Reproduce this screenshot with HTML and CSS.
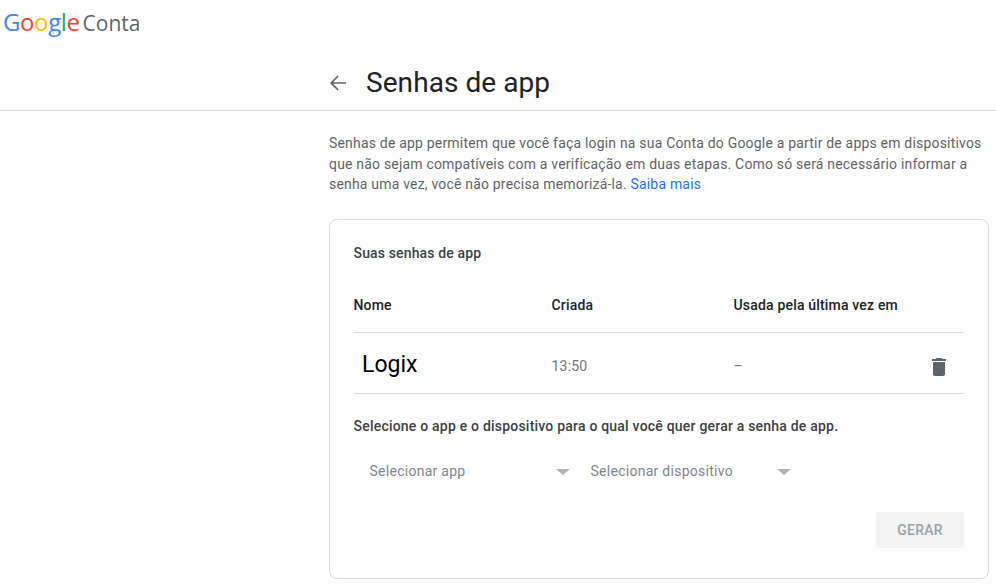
FILE: index.html
```html
<!DOCTYPE html>
<html lang="pt-BR">
<head>
<meta charset="utf-8">
<title>Senhas de app</title>
<link rel="stylesheet" href="styles.css">
</head>
<body>
<header class="brand"><span class="g-blue">G</span><span class="g-red">o</span><span class="g-yellow">o</span><span class="g-blue">g</span><span class="g-green">l</span><span class="g-red">e</span><span class="brand-name">Conta</span></header>
<div class="titlebar">
  <svg class="back" width="24" height="24" viewBox="0 0 24 24"><path d="M20 11.200H7.100l5.600-5.600L11.500 4.400 4 12l7.500 7.600 1.200-1.200-5.600-5.600H20z" fill="#5f6368"/></svg>
  <h1>Senhas de app</h1>
</div>
<main class="content">
  <p class="intro">Senhas de app permitem que você faça login na sua Conta do Google a partir de apps em dispositivos que não sejam compatíveis com a verificação em duas etapas. Como só será necessário informar a senha uma vez, você não precisa memorizá-la. <a href="#">Saiba mais</a></p>
  <section class="card">
    <h2>Suas senhas de app</h2>
    <div class="row head"><span class="c1">Nome</span><span class="c2">Criada</span><span class="c3">Usada pela última vez em</span></div>
    <div class="row item">
      <span class="c1 app">Logix</span><span class="c2 time">13:50</span><span class="c3 time">–</span>
      <svg class="trash" width="24" height="24" viewBox="0 0 24 24"><path d="M6 19c0 1.100.9 2 2 2h8c1.100 0 2-.9 2-2V7H6zM19 4h-3.500l-1-1h-5l-1 1H5v2h14z" fill="#5f6368"/></svg>
    </div>
    <p class="prompt">Selecione o app e o dispositivo para o qual você quer gerar a senha de app.</p>
    <div class="selects">
      <div class="select s1"><span>Selecionar app</span><i class="caret"></i></div>
      <div class="select s2"><span>Selecionar dispositivo</span><i class="caret"></i></div>
    </div>
    <div class="actions"><button class="gen" type="button">GERAR</button></div>
  </section>
</main>
</body>
</html>
```
FILE: styles.css
```css
* { box-sizing: border-box; }
html, body { margin: 0; background: #fff; }
body { font-family: Roboto, "Liberation Sans", sans-serif; color: #202124; height: 584px; overflow: hidden; }
.brand { height: 55px; padding: 5px 0 0 3px; font-family: "Open Sans", sans-serif; font-size: 24px; line-height: 34px; letter-spacing: -0.4px; font-weight: 500; }
.g-blue { color: #4285f4; }
.g-red { color: #ea4335; }
.g-yellow { color: #fbbc05; }
.g-green { color: #34a853; }
.brand-name { color: #5f6368; margin-left: 3px; letter-spacing: 0; font-size: 21px; font-weight: 400; }
.titlebar { height: 56px; padding-left: 326px; display: flex; align-items: center; gap: 16px; border-bottom: 1px solid #dadce0; }
.titlebar h1 { margin: 1px 0 0; font-size: 28px; font-weight: 400; line-height: 36px; color: #202124; letter-spacing: 0.07px; }
.back { flex: none; }
.content { margin-left: 329px; width: 660px; }
.intro { margin: 22px 0 24px; font-size: 14px; line-height: 20.500px; color: #5f6368; letter-spacing: 0.19px; }
.intro a { color: #1a73e8; text-decoration: none; }
.card { border: 1px solid #dadce0; border-radius: 8px; height: 360px; padding: 23px 24px 0 23.5px; }
.card h2 { margin: 0; font-size: 14px; font-weight: 500; line-height: 20px; color: #3c4043; letter-spacing: 0.15px; }
.row { display: flex; align-items: center; position: relative; }
.c1 { width: 198px; flex: none; }
.c2 { width: 182px; flex: none; }
.head { height: 66px; margin-top: 4px; border-bottom: 1px solid #dadce0; font-size: 14px; font-weight: 500; color: #202124; letter-spacing: 0.18px; padding-top: 11px; }
.item { height: 61px; border-bottom: 1px solid #dadce0; }
.app { font-size: 23px; color: #000; padding-left: 8.500px; padding-top: 3px; }
.time { font-size: 14px; color: #70757a; letter-spacing: 0.2px; padding-top: 7px; }
.trash { position: absolute; right: 13px; top: 22px; }
.prompt { margin: 22px 0 0; font-size: 14px; font-weight: 500; line-height: 20px; color: #3c4043; letter-spacing: 0.21px; }
.selects { display: flex; margin-top: 15px; }
.select { height: 40px; display: flex; align-items: center; font-size: 14px; color: #80868b; letter-spacing: 0.27px; padding-left: 16px; position: relative; }
.s1 { width: 221px; }
.s2 { width: 229px; }
.caret { width: 0; height: 0; border-left: 7px solid transparent; border-right: 7px solid transparent; border-top: 6px solid #b0b3b8; position: absolute; right: 5px; top: 18px; }
.s2 .caret { right: 13px; }
.actions { display: flex; justify-content: flex-end; margin-top: 21px; }
.gen { width: 88px; height: 36px; border: 0; border-radius: 3px; background: #f3f3f3; color: #9aa0a6; font: 500 14px Roboto, sans-serif; letter-spacing: 0.2px; }
```
